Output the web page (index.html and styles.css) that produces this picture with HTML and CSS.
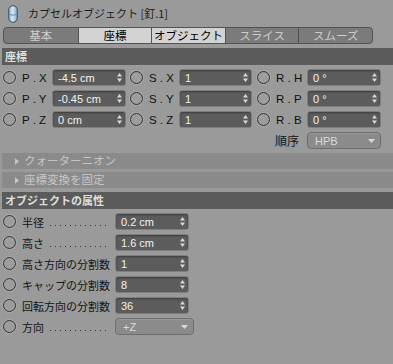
FILE: index.html
```html
<!DOCTYPE html>
<html lang="ja">
<head>
<meta charset="utf-8">
<title>カプセルオブジェクト</title>
<link rel="stylesheet" href="styles.css">
</head>
<body>
<div class="panel">
  <div class="title">
    <svg class="obj-icon" width="10" height="18" viewBox="0 0 10 18">
      <defs>
        <linearGradient id="cap" x1="0" x2="1" y1="0" y2="0">
          <stop offset="0" stop-color="#8fb2d8"/>
          <stop offset="0.45" stop-color="#d4e6f7"/>
          <stop offset="1" stop-color="#86a9d0"/>
        </linearGradient>
      </defs>
      <rect x="0.75" y="0.75" width="8.5" height="16.5" rx="4.25" fill="url(#cap)" stroke="#3c4a5c" stroke-width="1"/>
      <path d="M1.5 9.5 Q5 11 8.5 9.5" fill="none" stroke="#5a7aa0" stroke-width="0.8"/>
    </svg>
    <span class="title-text">カプセルオブジェクト [釘.1]</span>
  </div>

  <div class="tabs">
    <div class="tab">基本</div>
    <div class="tab on">座標</div>
    <div class="tab on">オブジェクト</div>
    <div class="tab">スライス</div>
    <div class="tab">スムーズ</div>
  </div>

  <div class="section">座標</div>

  <div class="coords">
    <span class="radio"></span><span class="lbl">P . X</span>
    <div class="field"><span>-4.5 cm</span><svg class="spin" width="5" height="9" viewBox="0 0 5 9"><path d="M2.5 0 L5 3.5 L0 3.5Z M2.5 9 L5 5.5 L0 5.5Z" fill="#d8d8d8"/></svg></div>
    <span class="radio"></span><span class="lbl">S . X</span>
    <div class="field"><span>1</span><svg class="spin" width="5" height="9" viewBox="0 0 5 9"><path d="M2.5 0 L5 3.5 L0 3.5Z M2.5 9 L5 5.5 L0 5.5Z" fill="#d8d8d8"/></svg></div>
    <span class="radio"></span><span class="lbl">R . H</span>
    <div class="field"><span>0 °</span><svg class="spin" width="5" height="9" viewBox="0 0 5 9"><path d="M2.5 0 L5 3.5 L0 3.5Z M2.5 9 L5 5.5 L0 5.5Z" fill="#d8d8d8"/></svg></div>

    <span class="radio"></span><span class="lbl">P . Y</span>
    <div class="field"><span>-0.45 cm</span><svg class="spin" width="5" height="9" viewBox="0 0 5 9"><path d="M2.5 0 L5 3.5 L0 3.5Z M2.5 9 L5 5.5 L0 5.5Z" fill="#d8d8d8"/></svg></div>
    <span class="radio"></span><span class="lbl">S . Y</span>
    <div class="field"><span>1</span><svg class="spin" width="5" height="9" viewBox="0 0 5 9"><path d="M2.5 0 L5 3.5 L0 3.5Z M2.5 9 L5 5.5 L0 5.5Z" fill="#d8d8d8"/></svg></div>
    <span class="radio"></span><span class="lbl">R . P</span>
    <div class="field"><span>0 °</span><svg class="spin" width="5" height="9" viewBox="0 0 5 9"><path d="M2.5 0 L5 3.5 L0 3.5Z M2.5 9 L5 5.5 L0 5.5Z" fill="#d8d8d8"/></svg></div>

    <span class="radio"></span><span class="lbl">P . Z</span>
    <div class="field"><span>0 cm</span><svg class="spin" width="5" height="9" viewBox="0 0 5 9"><path d="M2.5 0 L5 3.5 L0 3.5Z M2.5 9 L5 5.5 L0 5.5Z" fill="#d8d8d8"/></svg></div>
    <span class="radio"></span><span class="lbl">S . Z</span>
    <div class="field"><span>1</span><svg class="spin" width="5" height="9" viewBox="0 0 5 9"><path d="M2.5 0 L5 3.5 L0 3.5Z M2.5 9 L5 5.5 L0 5.5Z" fill="#d8d8d8"/></svg></div>
    <span class="radio"></span><span class="lbl">R . B</span>
    <div class="field"><span>0 °</span><svg class="spin" width="5" height="9" viewBox="0 0 5 9"><path d="M2.5 0 L5 3.5 L0 3.5Z M2.5 9 L5 5.5 L0 5.5Z" fill="#d8d8d8"/></svg></div>

    <span class="order-lbl">順序</span>
    <div class="select order-sel"><span>HPB</span><svg width="7" height="4" viewBox="0 0 7 4"><path d="M0 0 L7 0 L3.5 4Z" fill="#d8d8d8"/></svg></div>
  </div>

  <div class="fold"><svg width="4" height="7" viewBox="0 0 4 7"><path d="M0 0 L4 3.5 L0 7Z" fill="#c4c4c4"/></svg><span>クォーターニオン</span></div>
  <div class="fold"><svg width="4" height="7" viewBox="0 0 4 7"><path d="M0 0 L4 3.5 L0 7Z" fill="#c4c4c4"/></svg><span>座標変換を固定</span></div>

  <div class="section">オブジェクトの属性</div>

  <div class="attrs">
    <span class="radio"></span><span class="alabel"><span>半径</span><span class="leader"></span></span>
    <div class="field"><span>0.2 cm</span><svg class="spin" width="5" height="9" viewBox="0 0 5 9"><path d="M2.5 0 L5 3.5 L0 3.5Z M2.5 9 L5 5.5 L0 5.5Z" fill="#d8d8d8"/></svg></div>

    <span class="radio"></span><span class="alabel"><span>高さ</span><span class="leader"></span></span>
    <div class="field"><span>1.6 cm</span><svg class="spin" width="5" height="9" viewBox="0 0 5 9"><path d="M2.5 0 L5 3.5 L0 3.5Z M2.5 9 L5 5.5 L0 5.5Z" fill="#d8d8d8"/></svg></div>

    <span class="radio"></span><span class="alabel"><span>高さ方向の分割数</span></span>
    <div class="field"><span>1</span><svg class="spin" width="5" height="9" viewBox="0 0 5 9"><path d="M2.5 0 L5 3.5 L0 3.5Z M2.5 9 L5 5.5 L0 5.5Z" fill="#d8d8d8"/></svg></div>

    <span class="radio"></span><span class="alabel"><span>キャップの分割数</span></span>
    <div class="field"><span>8</span><svg class="spin" width="5" height="9" viewBox="0 0 5 9"><path d="M2.5 0 L5 3.5 L0 3.5Z M2.5 9 L5 5.5 L0 5.5Z" fill="#d8d8d8"/></svg></div>

    <span class="radio"></span><span class="alabel"><span>回転方向の分割数</span></span>
    <div class="field"><span>36</span><svg class="spin" width="5" height="9" viewBox="0 0 5 9"><path d="M2.5 0 L5 3.5 L0 3.5Z M2.5 9 L5 5.5 L0 5.5Z" fill="#d8d8d8"/></svg></div>

    <span class="radio"></span><span class="alabel"><span>方向</span><span class="leader"></span></span>
    <div class="select dir-sel"><span>+Z</span><svg width="7" height="4" viewBox="0 0 7 4"><path d="M0 0 L7 0 L3.5 4Z" fill="#d8d8d8"/></svg></div>
  </div>
</div>
</body>
</html>
```

FILE: styles.css
```css
* { box-sizing: border-box; }

html, body {
  margin: 0;
  padding: 0;
  background: #9a9a9a;
}

body {
  width: 393px;
  height: 364px;
  overflow: hidden;
  font-family: "Liberation Sans", "Noto Sans CJK JP", sans-serif;
  color: #141414;
}

.panel {
  width: 393px;
}

/* Title */
.title {
  height: 27px;
  display: flex;
  align-items: center;
  padding-left: 8px;
  gap: 10px;
}

.obj-icon {
  display: block;
}

.title-text {
  font: 11px "Noto Sans CJK JP", sans-serif;
  color: #1c1c1c;
  line-height: 1;
}

/* Tabs */
.tabs {
  margin-left: 3px;
  width: 370px;
  height: 17px;
  display: grid;
  grid-template-columns: repeat(5, 1fr);
  border: 1px solid #535353;
  border-radius: 4px;
  overflow: hidden;
  background: #7b7b7b;
}

.tab {
  display: flex;
  align-items: center;
  justify-content: center;
  font: 11.5px "Noto Sans CJK JP", sans-serif;
  color: #cdcdcd;
  border-left: 1px solid #535353;
  line-height: 1;
}

.tab:first-child { border-left: 0; }

.tab.on {
  background: #d3d3d3;
  color: #000;
}

/* Section header */
.section {
  margin: 4px 0 0 2px;
  height: 17px;
  background: #5b5b5b;
  color: #dedede;
  font: bold 11px "Noto Sans CJK JP", sans-serif;
  padding-left: 3px;
  display: flex;
  align-items: center;
  line-height: 1;
}

/* Coordinates grid */
.coords {
  margin-top: 4px;
  padding-left: 3px;
  display: grid;
  grid-template-columns: 13px 36px 74px 17px 36px 73px 18px 37px 74px;
  grid-auto-rows: 17px;
  row-gap: 4px;
  align-items: center;
}

.radio {
  justify-self: end;
  width: 13px;
  height: 13px;
  border-radius: 50%;
  border: 1.5px solid #333;
  background: #9d9d9d;
  box-shadow: 0 0 0 1px rgba(190, 190, 190, 0.4);
}

.lbl {
  padding-left: 6px;
  font-size: 11.5px;
  color: #111;
  white-space: pre;
}

.field {
  height: 17px;
  background: #5c5c5c;
  border: 1px solid #7f7f7f;
  border-radius: 3px;
  color: #f2f2f2;
  font-size: 11px;
  padding: 0 3px 0 5px;
  display: flex;
  align-items: center;
  justify-content: space-between;
  box-shadow: inset 0 1px 2px rgba(0, 0, 0, 0.35);
}

.spin { display: block; }

.order-lbl {
  grid-column: 8;
  justify-self: end;
  padding-right: 8px;
  font: 12px "Noto Sans CJK JP", sans-serif;
  color: #151515;
}

.select {
  height: 17px;
  border: 1px solid #6e6e6e;
  border-radius: 4px;
  background: #8b8b8b;
  color: #dadada;
  font-size: 11px;
  padding: 0 5px 0 7px;
  display: flex;
  align-items: center;
  justify-content: space-between;
  box-shadow: inset 0 1px 0 rgba(255, 255, 255, 0.12);
}

.order-sel { grid-column: 9; }

/* Folded groups */
.fold {
  margin: 4px 0 0 2px;
  height: 16px;
  background: #8a8a8a;
  color: #c6c6c6;
  font: 11.5px "Noto Sans CJK JP", sans-serif;
  display: flex;
  align-items: center;
  padding-left: 13px;
  gap: 5px;
  line-height: 1;
}

.fold + .fold { margin-top: 3px; }

.fold svg { display: block; }

/* Object attributes */
.attrs {
  margin-top: 4px;
  padding-left: 3px;
  display: grid;
  grid-template-columns: 13px 99px 79px;
  grid-auto-rows: 17px;
  row-gap: 4px;
  align-items: center;
}

.attrs .field { width: 74px; }

.alabel {
  height: 17px;
  display: flex;
  align-items: center;
  padding: 0 7px 0 6px;
  font: 11px "Noto Sans CJK JP", sans-serif;
  color: #141414;
  white-space: nowrap;
}

.leader {
  flex: 1;
  align-self: flex-end;
  height: 1px;
  margin: 0 0 4px 6px;
  background-image: linear-gradient(to right, #333 0, #333 1px, transparent 1px);
  background-size: 5px 1px;
  background-repeat: repeat-x;
}

.dir-sel { width: 79px; }
```
